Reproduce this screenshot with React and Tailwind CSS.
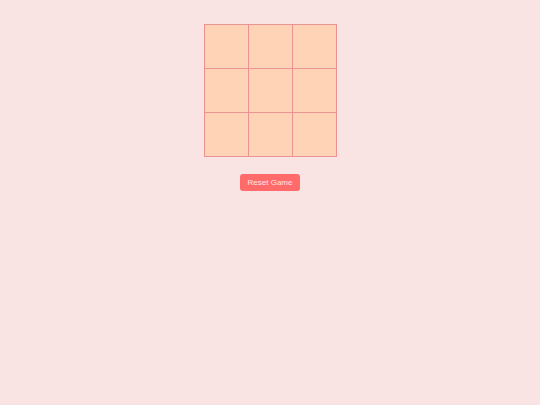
export default function App() {
  const cells = Array.from({ length: 9 });
  return (
    <div className="min-h-[405px] w-full bg-[#fae3e3] flex flex-col items-center pt-[24px] font-['Liberation_Sans',Arial,sans-serif]">
      <div className="grid grid-cols-[43px_43px_43px] gap-px p-px bg-[#ec9292]">
        {cells.map((_, i) => (
          <div key={i} className="h-[43px] bg-[#ffd3b6]" />
        ))}
      </div>
      <button className="mt-[17px] w-[60px] h-[17px] rounded-[3px] bg-[#ff6b6b] text-[#ffe4e4] text-[8px] leading-none">
        Reset Game
      </button>
    </div>
  );
}
